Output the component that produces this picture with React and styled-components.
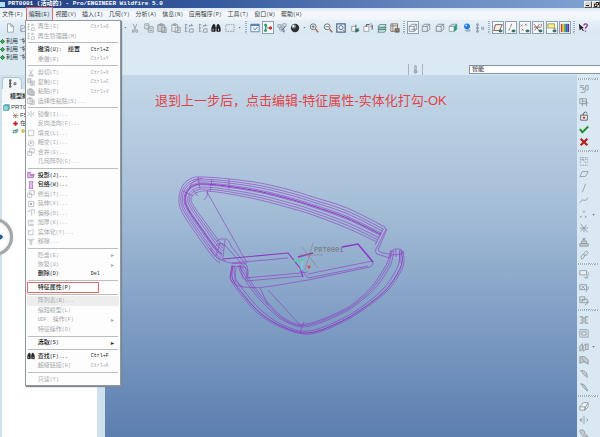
import React from 'react';
import styled, { createGlobalStyle, css } from 'styled-components';

const Global = createGlobalStyle`
  html, body, #root { margin: 0; height: 100%; overflow: hidden; }
  * { box-sizing: border-box; }
  body, button, select {
    font-family: "Liberation Sans", "Noto Sans CJK SC", sans-serif;
    font-size: 6px;
    line-height: 8px;
    color: #333b42;
  }
  button { border: 0; padding: 0; margin: 0; background: none; }
`;

const Window = styled.div`
  display: flex;
  flex-direction: column;
  height: 100vh;
  background: #dbeaf4;
`;

const TitleBar = styled.header`
  display: flex;
  align-items: center;
  height: 8px;
  flex: none;
  background: linear-gradient(90deg, #23407f 0%, #34599d 35%, #6688bf 70%, #7fa3d3 100%);
  color: #fff;
`;
const AppMark = styled.span`
  width: 5px;
  height: 5px;
  margin: 0 3px 0 0;
  background: #a9e4ee;
`;
const Title = styled.span`
  flex: 1;
  white-space: nowrap;
  font-family: "Liberation Mono", "Noto Sans CJK SC", monospace;
  font-weight: bold;
`;
const WindowButton = styled.button`
  width: 8px;
  height: 7px;
  background: #d6d3cc;
  border: 1px solid #f4f2ee;
  border-right-color: #55565a;
  border-bottom-color: #55565a;
  display: grid;
  place-items: center;
`;

const MenuBar = styled.nav`
  display: flex;
  height: 12px;
  flex: none;
  background: linear-gradient(#dde8f3, #f6f9fc 40%, #eef4f9);
`;
const MenuList = styled.div`
  display: flex;
  justify-content: space-between;
  align-items: center;
  width: 304px;
`;
const MenuSlot = styled.div`
  position: relative;
`;
const MenuButton = styled.button`
  display: block;
  height: 12px;
  padding: 0 2px;
  white-space: nowrap;
  ${p => p.$open && css`
    background: #dce7f1;
    outline: 1px solid #e0696b;
  `}
`;
const Mono = styled.span`
  font-family: "Liberation Mono", monospace;
  font-size: 5px;
`;

const Dropdown = styled.div`
  position: absolute;
  z-index: 5;
  left: -2px;
  top: 12px;
  width: 96px;
  height: 366px;
  padding: 1px;
  display: flex;
  flex-direction: column;
  background: #fdfdfe;
  border: 1px solid #8f979f;
  box-shadow: 1px 1px 1px #7c8894;
`;
const Entry = styled.button`
  position: relative;
  flex: 1 1 0;
  min-height: 0;
  display: grid;
  grid-template-columns: 11px 53px 1fr 8px;
  align-items: center;
  text-align: left;
  white-space: nowrap;
  color: ${p => (p.$on ? '#16181a' : '#a4a8ab')};
  font-weight: ${p => (p.$on ? 500 : 400)};
  background: ${p => (p.$hover ? '#ededee' : 'transparent')};
`;
const Separator = styled.hr`
  width: 90px;
  height: 4px;
  margin: 0 auto;
  border: 0;
  flex: none;
  background: linear-gradient(#b9bec3, #b9bec3) center / 100% 1px no-repeat;
`;
const Marker = styled.span`
  position: absolute;
  inset: -1px 20px -1px 0;
  border: 1px solid #e2696a;
`;

const ToolBar = styled.div`
  display: flex;
  align-items: center;
  height: 15px;
  flex: none;
  padding-left: 4px;
  background: linear-gradient(#e6f0f8, #d8e7f2);
`;
const ToolGroup = styled.div`
  display: flex;
  justify-content: space-between;
  flex: none;
  width: ${p => p.$w}px;
`;
const ToolButton = styled.button`
  display: grid;
  place-items: center;
  flex: none;
  width: 12px;
  height: 13px;
  ${p => p.$pressed && css`
    background: #f4f8fa;
    border: 1px solid #8fa3b3;
  `}
`;
const Grip = styled.span`
  flex: none;
  width: 2px;
  height: 13px;
  margin: 0 2px;
  background: repeating-linear-gradient(160deg, #9eb0bd 0 1px, #e5eff5 1px 2px);
`;
const Caret = styled.span`
  flex: none;
  width: 3px;
  height: 2px;
  margin: 0 2px;
  background: #74808a;
  clip-path: polygon(0 0, 100% 0, 50% 100%);
`;

const MessageArea = styled.section`
  display: flex;
  justify-content: space-between;
  height: 40px;
  flex: none;
  background: #dbe9f3;
`;
const Messages = styled.ul`
  list-style: none;
  margin: 0;
  padding: 2px 0 0;
  color: #26343a;
  li { display: flex; align-items: center; gap: 1px; height: 8px; white-space: nowrap; }
`;
const FilterBar = styled.div`
  display: flex;
  align-items: center;
  align-self: flex-end;
  width: 192px;
  height: 12px;
`;
const FilterIcon = styled.span`
  display: grid;
  place-items: center;
  width: 15px;
  height: 11px;
  border: solid #a5b3bd;
  border-width: 0 1px;
`;
const FilterSelect = styled.select`
  appearance: none;
  flex: 1;
  height: 9px;
  margin-left: 46px;
  padding: 0 2px;
  border: 1px solid #7f95a5;
  border-right: 0;
  border-radius: 0;
  background: #fff;
  line-height: 7px;
  color: #222;
`;

const Body = styled.main`
  display: flex;
  flex: 1;
  min-height: 0;
`;
const TreePanel = styled.aside`
  position: relative;
  width: 105px;
  flex: none;
  display: flex;
  flex-direction: column;
  padding: 2px 8px 0 2px;
  background: #cfe1ed;
`;
const Tab = styled.button`
  display: grid;
  place-items: center;
  width: 20px;
  height: 12px;
  background: #f3f7fa;
  border: 1px solid #afc2d0;
  border-bottom: 0;
  border-radius: 3px 5px 0 0;
`;
const TreeHeading = styled.h2`
  margin: 0;
  height: 14px;
  padding: 3px 0 0 8px;
  font-size: 6px;
  line-height: 8px;
  font-weight: bold;
  background: #f5f7f8;
`;
const Tree = styled.ul`
  flex: 1;
  margin: 0;
  padding: 0;
  list-style: none;
  background: #fff;
`;
const TreeItem = styled.li`
  display: flex;
  align-items: center;
  gap: 1px;
  height: 8px;
  padding-left: ${p => (p.$child ? 10 : 1)}px;
  white-space: nowrap;
`;
const SideHandle = styled.button`
  position: absolute;
  left: -25px;
  top: 143px;
  width: 38px;
  height: 38px;
  border-radius: 50%;
  border: 3px solid #a3a6a8;
  background: radial-gradient(#fff 55%, #d6d8da);
  box-shadow: 0 0 1px #777;
  display: flex;
  align-items: center;
  justify-content: flex-end;
  padding-right: 7px;
`;

const Viewport = styled.section`
  flex: 1;
  min-width: 0;
  display: grid;
  overflow: hidden;
  background: linear-gradient(#c3d8e8, #a6bfd8 35%, #7f9dc4 68%, #5c7eb0);
  > * { grid-area: 1 / 1; }
`;
const Caption = styled.p`
  margin: 16px 0 0 50px;
  font-size: 13px;
  line-height: 20px;
  color: #e04447;
  white-space: nowrap;
`;
const Model = styled.svg`
  display: block;
  width: 100%;
  height: auto;
  fill: none;
  stroke: #9038c4;
  stroke-width: 0.6;
`;

const SideBar = styled.aside`
  width: 23px;
  flex: none;
  overflow: hidden;
  padding-top: 2px;
  background: #d9e8f2;
`;
const SideGrip = styled.div`
  width: 20px;
  height: 2px;
  margin: 1px 0 2px 1px;
  background: repeating-linear-gradient(110deg, #9eb0bd 0 1px, #e5eff5 1px 2px);
`;
const SideGroup = styled.div`
  display: flex;
  flex-direction: column;
  height: ${p => p.$h}px;
`;
const SideRow = styled.div`
  flex: 1 1 0;
  min-height: 0;
  display: flex;
  align-items: center;
  padding-left: 1px;
`;

const G = '#8b979e';
const L = '#a9b1b6';
const cube = (
  <g stroke="#7b868d">
    <path d="M1.500 4h6v6h-6zM4 1.500h6.500v6H4M1.500 4 4 1.500M7.500 4l3-2.500M7.500 10l3-2.500" />
  </g>
);
const shapes = {
  new: <path d="M3 1h4l3 3v7H3zM7 1v3h3" fill="#fff" />,
  open: <path d="M1 10V3h3l1 1h5v2M1 10l2-4h9l-2 4z" fill="#eef" />,
  cut: <path d="M3.500 1 7 8M8.500 1 5 8M3 8.500h2v2.500H3zM7 8.500h2v2.500H7z" />,
  copy: <path d="M1 1h5v6H1zM5 4.500h6V11H5zM2.500 3h2M6.500 7h3M6.500 9h3" fill="#e4e8ea" />,
  paste: <path d="M1 2h8v8H1zM3.500 1h3v2h-3zM5.500 5H11v6.500H5.500z" fill="#c9ced1" />,
  special: <path d="M1 2h7v8H1zM3 1h3v2H3zM5 5h6v6.500H5zM7 7h3M7 9h3" fill="#eef1f2" />,
  regen: <path d="M2 1v10M1 2h3M1 6h3M1 10h3M6 3h5M6 5l2-2M7 7h4v4H6zM9 1v3" />,
  find: (
    <g fill="#222" stroke="#222">
      <path d="M2.500 2h2l.5 3v5H1V6zM7.500 2h2L11 6v4H7V5z" />
      <path d="M5 6h2" />
      <path d="M2.500 7v2M9 7v2" stroke="#fff" />
    </g>
  ),
  select: <path d="M1 2h10v8H1z" strokeDasharray="2 1" />,
  win: <g stroke="#4974b8"><path d="M1 1.500h10v9H1z" fill="#edf5fd" /><path d="M1 2.500h10" strokeWidth="2" /><path d="m4 6 2 2 3-3" stroke="#356" /></g>,
  nodes: (
    <g>
      <path d="M3 3v6M3 6h5M3 3l2 2" stroke="#258b5a" />
      <path d="M2 1.500h2v2H2zM2 8h2v2H2z" fill="#30bb78" stroke="#208a58" />
      <circle cx="9" cy="6" r="1.500" fill="#e33" stroke="#a22" />
    </g>
  ),
  refit: <g><path d="M1 2h4v3H1zM7 1h4v3H7zM3 6h5v2H3zM4 3l5 6" /><path d="m5 10 5-6" stroke="#385fb3" /><circle cx="8" cy="10" r="1" fill="#c54" /></g>,
  sphere: <g stroke="none"><circle cx="6" cy="6" r="5" fill="#2c3033" /><circle cx="4.500" cy="4" r="2.600" fill="#91999e" /><circle cx="4" cy="3.500" r="1" fill="#fff" /></g>,
  zoomin: <g stroke="#5d6064"><circle cx="5" cy="4.500" r="3.500" fill="#f3f7fa" /><path d="M3 4.500h4M5 2.500v4" /><path d="m8 7.500 3 3.500" stroke="#b2644e" strokeWidth="1.800" /></g>,
  zoomout: <g stroke="#5d6064"><circle cx="5" cy="4.500" r="3.500" fill="#f3f7fa" /><path d="M3 4.500h4" /><path d="m8 7.500 3 3.500" stroke="#b2644e" strokeWidth="1.800" /></g>,
  zoomfit: <g stroke="#51698c"><path d="M1 1h10v10H1z" fill="#e8f0f8" strokeWidth="1.500" /><circle cx="6" cy="5.500" r="2.500" /><path d="m8 8 2 2" stroke="#b2644e" /></g>,
  orient: <g><path d="M2 4h5v6H2z" fill="#edf3f2" /><path d="M7 2v3M8 7h3M7 7l4 2-4 2z" stroke="#245f51" fill="#3c8a74" /></g>,
  views: <g><path d="M1 4h6v6H1z" fill="#fff" /><path d="M4 4V2h4M9 1h1M9 4h1M11 2v6" stroke="#333" /></g>,
  layers: <g stroke="#4d7771"><path d="m3 8-2 3h8l2-3z" fill="#eee" /><path d="m3 5-2 3h8l2-3z" fill="#7cd0c0" /><path d="m3 2-2 3h8l2-3z" fill="#e1f3ed" /></g>,
  table: <g stroke="#75695f"><path d="M1 1h8v9H1zM1 3.500h8M3.500 1v9" fill="#f5f2ec" /><path d="M6 6.500h5V11H6z" fill="#776e66" /><circle cx="8.500" cy="8.500" r="1" fill="#fff" /></g>,
  cube,
  hidden: <path d="M1.500 4h6v6h-6zM1.500 4 4 1.500h6.500v6l-3 2.500M7.500 4l3-2.500" stroke="#7b868d" />,
  shaded: <g><path d="M1.500 4h6v6h-6z" fill="#f2fffb" /><path d="m7.500 4 3-2.500v6l-3 2.500z" fill="#299b7c" stroke="#399c82" /><path d="m1.500 4 3-2.500h6l-3 2.500z" fill="#b2e9d9" /></g>,
  blue: <g stroke="none"><circle cx="6" cy="4" r="3.500" fill="#1b78e5" /><circle cx="5" cy="3" r="1.200" fill="#c2e9ff" /><ellipse cx="7" cy="9" rx="3.500" ry="1.500" fill="#97afc5" /></g>,
  tree: <path d="M3 1.500v9M2 1h2v2H2zM2 5h2v2H2zM2 9h2v2H2zM8 5h2.500v2.500H8z" />,
  plane: <g stroke="#8b6253"><path d="m3 2h8L8 9H1z" fill="#f5eeea" /><path d="M3 2h8L8 9H1z" fill="#f5eeea" /><ellipse cx="9" cy="9.500" rx="2" ry="1.200" fill="#33705f" stroke="#2c6657" /></g>,
  axis: <g stroke="#8b6253"><path d="M7 1 3 10" strokeDasharray="4 1" /><ellipse cx="9" cy="9.500" rx="2" ry="1.200" fill="#33705f" stroke="#2c6657" /></g>,
  points: <g stroke="#8b5a49"><path d="m1 2 2 2m0-2L1 4M6 1l2 2m0-2L6 3M2 7l2 2m0-2L2 9" /><ellipse cx="9" cy="9.500" rx="2" ry="1.200" fill="#33705f" stroke="#2c6657" /></g>,
  csys: <g stroke="#8b5a49"><path d="m1 1 7 9M8 1 2 9M1 5h9M10 1v3" /><ellipse cx="9" cy="9.500" rx="2" ry="1.200" fill="#33705f" stroke="#2c6657" /></g>,
  note: <g><path d="M1 1h8v5H1z" fill="#f6ef8c" stroke="#9b995b" /><ellipse cx="9" cy="9.500" rx="2" ry="1.200" fill="#33705f" stroke="#2c6657" /><path d="M8 7h3" stroke="#8b5a49" /></g>,
  colors: <g strokeWidth="2"><path d="M2 1v10" stroke="#c93a31" /><path d="M4 1v10" stroke="#e8c432" /><path d="M6 1v10" stroke="#36a65a" /><path d="M8 1v10" stroke="#315fc0" /><path d="M10 1v10" stroke="#5b3181" /></g>,
  help: <g><path d="m1 1 1 8 2-2 2 3 1-1-2-3h2z" fill="#222" stroke="none" /><path d="M7 3q0-2 2-2 2.500 0 2 2.500L9 6v1M9 9v1.500" stroke="#96348e" strokeWidth="1.600" /></g>,
  mirror: <path d="M6 1v10M1 3l3 3-3 3M11 3 8 6l3 3" />,
  rect: <path d="M2 2h8v8H2z" />,
  intersect: <path d="M2 5 6 2l4 2v5l-4 2-4-2zM4 8l4-4M5 4v3h3" />,
  merge: <path d="M4 1h7v6H4zM1 5h6v6H1z" />,
  project: <g stroke="#9a4fb5"><path d="M1 10V2h4v3h6l-2 5z" fill="#e4bdeb" /><path d="M4 7h6" /></g>,
  wrap: <g stroke="#8a4bab"><path d="M3 1h6L8 4v4l1 3H3l1-3V4z" fill="#ebcaf1" /></g>,
  extend: <g><path d="M2 2h8v8H2z" /><path d="M5 5h2v2H5z" fill="#777" /></g>,
  offset: <path d="M2 3h5v7M5 1h6v6M2 3v2" />,
  thicken: <path d="M10 2H2v8h8M4 4h6M4 8h6" />,
  solidify: <path d="M2 4v6h7V4M1 3l4 2 3-3 3 2" />,
  remove: <path d="M1 2h10M3 4h6M5 4v6h2V4" />,
  sRegen: <path d="M1 2h5M1 4h4v3M2 10h5V7h4V2H8v4M4 7l4-3" />,
  sTree: <path d="M1 2h8v6H1zM4 2v9M4 5h5M4 8h3M9 6v5M7 8l2-2 2 2" />,
  lock: <g><path d="M2 5h8v6H2z" fill="#f8f8f8" stroke="#465152" /><path d="M5 5V3l3-2 2 2" stroke="#465152" /><path d="M6 6.500v3M4.500 8h3" stroke="#d33" strokeWidth="1.500" /></g>,
  ok: <path d="m1 6 3 4 7-7" stroke="#159023" strokeWidth="2.200" />,
  cancel: <path d="m2 2 8 8M10 2l-8 8" stroke="#b5201d" strokeWidth="2.600" />,
  sketch: <path d="M1 8q3-6 5-2t5 0M1 2h10M1 4h10M1 11h10" strokeDasharray="2 1" />,
  para: <path d="M4 3h7L8 9H1z" />,
  line: <path d="M8 1 4 11" />,
  curve: <path d="M1 8q3-5 5-3t5-3" />,
  dots: <path d="m5 1 2 2m0-2L5 3M1 7l2 2m0-2L1 9M7 7l2 2m0-2L7 9" />,
  coord: <path d="m2 1 8 10M9 2 2 10M1 6h10M6 6v5" />,
  stamp: <path d="M1 8h10v3H1zM3 5h6v3H3zM6 1v4M4 2l4 2M8 1 4 4" fill="#c9cfd3" />,
  chain: <path d="m2 9 3-4 2 2-3 4zM6 4l3-3 2 2-3 4z" />,
  boxArrow: <path d="M1 2h8v5H1zM11 4v3l-3 4M6 9l2 2 3-1" fill="#edf2f5" />,
  boxFill: <path d="M1 2h8v6H1zM3 3l4 4M7 3 3 7M11 4v3l-3 4" />,
  boxes: <path d="M1 1h6v4H1zM4 4h6v4H4zM11 6v2l-4 3M1 5v3h3" />,
  hole: <path d="M1 2h3v8H1M11 2H8v8h3M4 2l2 2 2-2M6 4v6" fill="#d5dbde" />,
  shell: <path d="M1 2h9l1 1v8H2l-1-1zM3.500 4.500h5v4h-5z" />,
  rib: <path d="M1 5 4 2v7l-3 2zM5 5l3-3v7l-3 2zM8 4l3-2v7H8" fill="#d5dbde" />,
  draft: <path d="M1 2h6l4 4v5L6 8 1 10zM3 4l5 5" fill="#c3cacf" />,
  round: <path d="M2 2h3q5 1 5 8L6 7z" fill="#c6cdd2" />,
  chamfer: <path d="m2 2 4 1 4 6v2L5 6z" fill="#c6cdd2" />,
  block: <path d="M1 7 5 2h6L8 7zM1 7v4h6V7M8 7l-1 4 4-4V2" fill="#f0f2f4" />,
  revolve: <path d="M6 1v10M3 4Q0 6 3 8M9 4q3 2 0 4M4 5l-3 1 3 2" />,
  sweep: <path d="m2 2 4 1 1 4 4 3-3 1-4-2-3-5z" fill="#c6cdd2" />,
  filter: <g><path d="M5 1h2v6H5z" fill="#ddd" /><circle cx="6" cy="9" r="2" fill="#a9b4bc" /></g>,
  bullet: <path d="m6 1 5 5-5 5-5-5z" fill="#2fb24e" stroke="#12652a" strokeWidth="2" />,
  part: <path d="M1 3h8v8H1zM1 3l2-2h8v8l-2 2" fill="#8edfe2" stroke="#2d7d8b" />,
  red: <path d="M6 2v8M2 6h8" stroke="#c02525" strokeWidth="3" />,
  green: <g><path d="M2 9V4h5v4H2M5 4l5-2v4L7 8" stroke="#287765" fill="#b9ded3" /></g>,
  bulb: <circle cx="6" cy="6" r="3" fill="#e6dc3c" stroke="#8c8a2a" />,
};

const Svg = styled.svg`
  display: block;
  flex: none;
  width: ${p => p.$s}px;
  height: ${p => p.$s}px;
  fill: none;
`;
const Icon = ({ n, s = 10, c = G }) => (
  <Svg $s={s} viewBox="0 0 12 12" stroke={c} strokeWidth="1" aria-hidden="true">{shapes[n]}</Svg>
);

const menus = [
  ['文件', 'F'], ['编辑', 'E'], ['视图', 'V'], ['插入', 'I'], ['几何', 'Y'], ['分析', 'A'],
  ['信息', 'N'], ['应用程序', 'P'], ['工具', 'T'], ['窗口', 'W'], ['帮助', 'H'],
];

const editMenu = [
  [{ i: 'regen', t: '再生', k: '(G)', s: 'Ctrl+G' }, { i: 'regen', t: '再生管理器', k: '(M)' }],
  [{ t: '撤消', k: '(U): ', after: '绘置', s: 'Ctrl+Z', on: true }, { t: '重做', k: '(R)', s: 'Ctrl+Y' }],
  [
    { i: 'cut', t: '剪切', k: '(T)', s: 'Ctrl+X' }, { i: 'copy', t: '复制', k: '(C)', s: 'Ctrl+C' },
    { i: 'paste', t: '粘贴', k: '(P)', s: 'Ctrl+V' }, { i: 'special', t: '选择性粘贴', k: '(S)...' },
  ],
  [
    { i: 'mirror', t: '镜像', k: '(I)...' }, { t: '反向法向', k: '(F)...' }, { i: 'rect', t: '填充', k: '(L)...' },
    { i: 'intersect', t: '相交', k: '(I)...' }, { i: 'merge', t: '合并', k: '(G)...' }, { t: '几何阵列', k: '(G)...' },
  ],
  [
    { i: 'project', t: '投影', k: '(J)...', on: true }, { i: 'wrap', t: '包络', k: '(W)...', on: true },
    { i: 'merge', t: '修剪', k: '(T)...' }, { i: 'extend', t: '延伸', k: '(X)...' },
    { i: 'offset', t: '偏移', k: '(O)...' }, { i: 'thicken', t: '加厚', k: '(K)...' },
    { i: 'solidify', t: '实体化', k: '(Y)...' }, { i: 'remove', t: '移除', k: '...' },
  ],
  [{ t: '隐含', k: '(E)', sub: true }, { t: '恢复', k: '(U)', sub: true }, { t: '删除', k: '(D)', s: 'Del', on: true }],
  [{ t: '特征属性', k: '(P)', on: true, marked: true }],
  [
    { t: '阵列表', k: '(B)...', hover: true }, { t: '缩短模型', k: '(L)' },
    { pre: 'UDF ', t: '操作', k: '(F)', sub: true }, { t: '特征操作', k: '(O)' },
  ],
  [{ t: '选取', k: '(S)', on: true, sub: true }],
  [{ i: 'find', t: '查找', k: '(F)...', s: 'Ctrl+F', on: true }, { t: '超级链接', k: '(H)', s: 'Ctrl+K' }],
  [{ t: '只读', k: '(Y)' }],
];

const Tools = ({ w, items, pressed = [] }) => (
  <ToolGroup $w={w}>
    {items.map((n, i) => (
      <ToolButton key={i} aria-label={n} $pressed={pressed.includes(i)}>
        <Icon n={n} s={10} />
      </ToolButton>
    ))}
  </ToolGroup>
);

const sideGroups = [
  [67, ['sRegen', 'sTree', 'lock', 'ok', 'cancel']],
  [108, ['sketch', 'para', 'line', 'curve', 'dots', 'coord', 'stamp', 'chain']],
  [41, ['boxArrow', 'boxFill', 'boxes']],
  [81, ['hole', 'shell', 'rib', 'draft', 'round', 'chamfer']],
  [41, ['block', 'revolve', 'sweep']],
];

const smooth = pts => {
  let d = `M${pts[0][0]} ${pts[0][1]}`;
  for (let i = 0; i < pts.length - 1; i++) {
    const a = pts[i - 1] || pts[i];
    const b = pts[i];
    const c = pts[i + 1];
    const e = pts[i + 2] || c;
    d += `C${b[0] + (c[0] - a[0]) / 6} ${b[1] + (c[1] - a[1]) / 6} ${c[0] - (e[0] - b[0]) / 6} ${c[1] - (e[1] - b[1]) / 6} ${c[0]} ${c[1]}`;
  }
  return d;
};
const blend = (a, b, t) => a.map((p, i) => [p[0] + (b[i][0] - p[0]) * t, p[1] + (b[i][1] - p[1]) * t]);

const upperOuter = [[220, 263], [213, 257], [197, 235], [182, 212], [179, 198], [183, 185], [192, 178], [203, 177], [230, 179], [260, 183], [290, 190], [313, 197], [347, 208], [385, 227]];
const upperInner = [[224, 246], [219, 241], [208, 226], [195, 208], [191, 200], [193, 195], [198, 192], [207, 191], [230, 194], [260, 200], [290, 208], [313, 215], [347, 228], [377, 242]];
const lowerOuter = [[403, 251], [404, 262], [400, 273], [389, 289], [370, 305], [343, 322], [310, 334], [283, 328], [260, 315], [243, 297], [231, 280], [232, 266]];
const lowerInner = [[391, 250], [388, 260], [385, 267], [373, 285], [360, 298], [343, 310], [307, 324], [287, 320], [270, 305], [256, 289], [245, 272], [240, 265]];

const Wireframe = () => (
  <Model viewBox="105 75 472 362" role="img" aria-label="PRT0001">
    {[0, 0.15, 0.28, 0.42, 0.5, 0.56, 0.72, 0.86, 1].map(t => (
      <path key={t} d={smooth(blend(upperOuter, upperInner, t))} strokeWidth={t === 0.5 ? 1 : 0.6} />
    ))}
    {[0, 0.12, 0.3, 0.75, 0.88, 1].map(t => (
      <path key={t} d={smooth(blend(lowerOuter, lowerInner, t))} strokeWidth={t === 0.12 ? 1 : 0.6} />
    ))}
    <path d="M385 227q2 3-1 6l-9 18q1 4 5 4l10 3q0-8 5-9 9-1 8 5M383 229l-8 16M387 229l-9 21q1 3 12 4M396 249v8M400 249v14M391 255l11-1" />
    <path d="M198 177l2 12M212 179l-2 13M229 179v10M193 190l5 6M183 191l10 5M203 178q-12 1-14 12M207 190q2 5-3 10" />
    <path d="M207 192 247 263M268 290l33 36" />
    <path d="M210 248q5 12 20 15l17 1M217 241q2-3 8-2 4 0 6 7l16 20q2 8 0 11M215 247q4-5 9-3l24 27M220 243l-4 13M225 240l-2 17q-2 3 2 4M232 265l-2 13q2 7 13 9M232 266l13 1q3 5 2 10l-2 3M236 267l-1 14 8 6M240 265l3 14" />
    <path d="M223 259l65-6 12 15 3 9" strokeWidth="1.100" />
    <path d="M232 263l56-5M245 278l55-5 8-1M246 281l57-5M243 287q15 2 30-1l35-6 62-13q4-2 3-5M308 274l64-13M300 268l8 10 60-12M268 305l-8-17M300 332l4-10" />
    <path d="M298 257l15-4M342 247l16-3 15 18" strokeWidth="1.600" />
    <g stroke="#8d7f79">
      <path d="M302 247l16 21M313 243l-8 27M300 255h23" />
    </g>
    <path d="M293 261h4l6-2" stroke="#4bd39b" strokeWidth="1.400" />
    <path d="M303 261l-2 9" stroke="#66d8e5" strokeWidth="1.400" />
    <circle cx="309" cy="267" r="1.400" fill="#e34545" stroke="none" />
    <text x="314" y="252" fill="#74716e" stroke="none" fontFamily="Liberation Mono, monospace" fontSize="7">PRT0001</text>
  </Model>
);

const EditDropdown = () => (
  <Dropdown role="menu">
    {editMenu.map((group, g) => (
      <React.Fragment key={g}>
        {g > 0 && <Separator />}
        {group.map((e, i) => (
          <Entry key={i} role="menuitem" $on={e.on} $hover={e.hover}>
            <span>{e.i && <Icon n={e.i} s={8} c={L} />}</span>
            <span>
              {e.pre && <Mono>{e.pre}&nbsp;</Mono>}{e.t}<Mono>{e.k}</Mono>{e.after && <>&nbsp;&nbsp;{e.after}</>}
            </span>
            <Mono>{e.s}</Mono>
            <span>{e.sub && '▸'}</span>
            {e.marked && <Marker />}
          </Entry>
        ))}
      </React.Fragment>
    ))}
  </Dropdown>
);

export default function App() {
  return (
    <Window>
      <Global />
      <TitleBar>
        <AppMark />
        <Title>PRT0001 (活动的) - Pro/ENGINEER Wildfire 5.0</Title>
        <WindowButton aria-label="最小化"><svg width="4" height="4"><path d="M0 3.500h3" stroke="#222" /></svg></WindowButton>
        <WindowButton aria-label="还原"><svg width="5" height="5"><path d="M.5 2h2.500v2.500H.5zM2 .5h2.500V3" stroke="#222" fill="none" /></svg></WindowButton>
      </TitleBar>

      <MenuBar>
        <MenuList>
          {menus.map(([label, key]) => (
            <MenuSlot key={label}>
              <MenuButton $open={key === 'E'}>{label}<Mono>({key})</Mono></MenuButton>
              {key === 'E' && <EditDropdown />}
            </MenuSlot>
          ))}
        </MenuList>
      </MenuBar>

      <ToolBar>
        <Tools w={118} items={['new', 'open', 'copy', 'table', 'regen', 'regen', 'tree', 'rect']} />
        <Caret />
        <Tools w={107} items={['cut', 'copy', 'paste', 'special', 'regen', 'regen', 'find', 'select']} />
        <Caret />
        <Grip />
        <Tools w={52} items={['win', 'nodes', 'refit', 'sphere']} pressed={[1]} />
        <Caret />
        <Tools w={93} items={['zoomin', 'zoomout', 'zoomfit', 'orient', 'views', 'layers', 'table']} />
        <Grip />
        <Tools w={79} items={['cube', 'hidden', 'hidden', 'shaded', 'blue', 'tree']} pressed={[0]} />
        <Grip />
        <Tools w={79} items={['plane', 'axis', 'points', 'csys', 'note', 'colors']} pressed={[0, 1, 2, 3, 4, 5]} />
        <Grip />
        <Tools w={12} items={['help']} />
      </ToolBar>

      <MessageArea>
        <Messages>
          {[0, 1, 2].map(i => <li key={i}><Icon n="bullet" s={5} />利用 “特征”</li>)}
        </Messages>
        <FilterBar>
          <FilterIcon><Icon n="filter" s={9} /></FilterIcon>
          <FilterSelect aria-label="选取过滤器" defaultValue="智能"><option>智能</option></FilterSelect>
        </FilterBar>
      </MessageArea>

      <Body>
        <TreePanel>
          <Tab aria-label="模型树"><Icon n="tree" s={9} c="#444" /></Tab>
          <TreeHeading>模型树</TreeHeading>
          <Tree>
            <TreeItem><Icon n="part" s={7} />PRT0001</TreeItem>
            <TreeItem $child><Icon n="coord" s={7} c="#8b5a49" />F5</TreeItem>
            <TreeItem $child><Icon n="red" s={7} />在此</TreeItem>
            <TreeItem $child><Icon n="green" s={7} /><Icon n="bulb" s={6} /></TreeItem>
          </Tree>
          <SideHandle aria-label="展开"><svg width="9" height="6"><path d="M0 3h7M6 1l2 2-2 2" stroke="#24629c" strokeWidth="2" fill="none" /></svg></SideHandle>
        </TreePanel>

        <Viewport>
          <Wireframe />
          <Caption>退到上一步后，点击编辑-特征属性-实体化打勾-OK</Caption>
        </Viewport>

        <SideBar>
          {sideGroups.map(([h, items], g) => (
            <React.Fragment key={g}>
              <SideGrip />
              <SideGroup $h={h}>
                {items.map(n => (
                  <SideRow key={n}>
                    <ToolButton aria-label={n}><Icon n={n} s={10} /></ToolButton>
                    {(n === 'dots' || n === 'rib') && <Caret />}
                  </SideRow>
                ))}
              </SideGroup>
            </React.Fragment>
          ))}
        </SideBar>
      </Body>
    </Window>
  );
}
